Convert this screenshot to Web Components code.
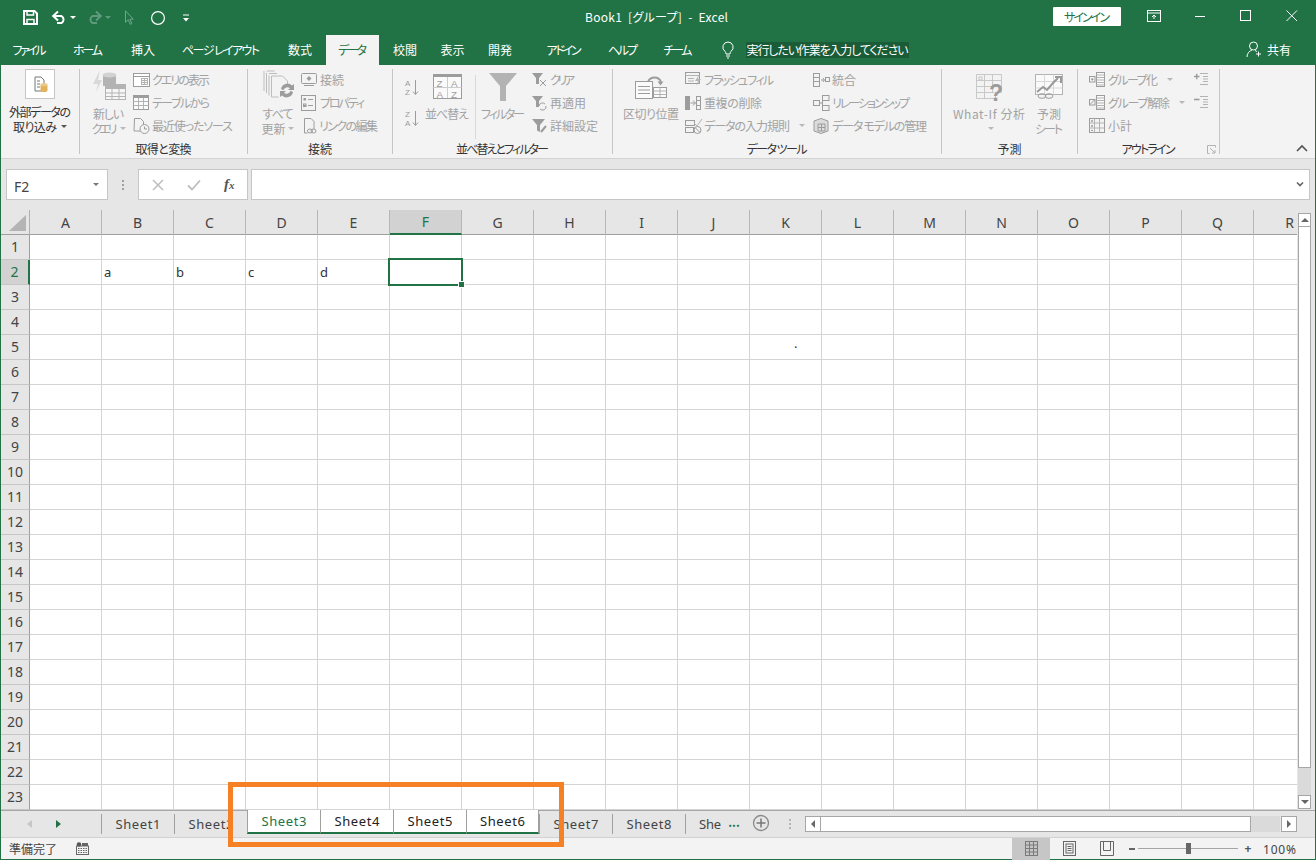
<!DOCTYPE html>
<html lang="ja"><head><meta charset="utf-8"><title>Book1</title>
<style>html,body{margin:0;padding:0;background:#217346}body{font-family:"Noto Sans CJK JP","Noto Sans",sans-serif;font-size:12px}</style>
</head><body>
<x-app></x-app>
<script>
const FONT='"Noto Sans CJK JP","Noto Sans",sans-serif';
const G='#b3b3b3',D='#9c9c9c';
class Base extends HTMLElement{
  constructor(){super();this.attachShadow({mode:'open'});}
  html(h){this.shadowRoot.innerHTML=h;}
  a(n,d){return this.hasAttribute(n)?this.getAttribute(n):d;}
}
class XT extends Base{
  constructor(){super();this.html('<style>:host{display:inline-block;white-space:pre;width:max-content;font-feature-settings:"palt" 1}</style><slot></slot>');}
  connectedCallback(){
    const s=+this.a('s',12),w=this.a('w',null),t=this.textContent;
    this.style.fontSize=s+'px';
    if(this.a('f'))this.style.fontFamily=this.a('f');
    if(w!==null&&t.length>1){
      const m=this.getBoundingClientRect().width,ls=(+w-m)/(t.length-1);
      this.style.letterSpacing=ls.toFixed(3)+'px';
      this.style.marginRight=(-ls).toFixed(3)+'px';
    }
  }
}
const L=(c)=>`fill="none" stroke="${c}"`;
const ICONS={
 save:[15,15,`<path d="M1 1h10.500L14 3.500V14H1z" ${L('#fff')} stroke-width="2"/><path d="M4 1.500v3.500h6.500V1.500M4 14V9.500h7V14" ${L('#fff')} stroke-width="1.500"/>`],
 undo:[15,13,`<path d="M2 5h7.500a4 4 0 0 1 0 7H5" ${L('#fff')} stroke-width="2"/><path d="M6 .5L1.200 5 6 9.500" ${L('#fff')} stroke-width="2"/>`],
 redo:[15,13,`<path d="M13 5H5.500a4 4 0 0 0 0 7H10" ${L('#5f9a7c')} stroke-width="2"/><path d="M9 .5L13.800 5 9 9.500" ${L('#5f9a7c')} stroke-width="2"/>`],
 cursor:[10,16,`<path d="M1.500 .8v11.500l2.800-2.600 2 4.600 1.600-.7-2-4.400h3.400z" ${L('#6fa58a')}/>`],
 circle:[14,14,`<circle cx="7" cy="7" r="6.400" ${L('#fff')} stroke-width="1.200"/>`],
 custom:[6,8,`<path d="M0 1h6" stroke="#fff"/><path d="M0 4h6L3 7.500z" fill="#fff"/>`],
 ribbonopt:[14,12,`<rect x=".5" y=".5" width="13" height="11" ${L('#fff')}/><path d="M0 3h14" stroke="#fff"/><path d="M7 9V5M5 7l2-2 2 2" ${L('#fff')}/>`],
 min:[12,12,`<path d="M1 6.500h10" stroke="#fff"/>`],
 max:[12,12,`<rect x=".5" y=".5" width="10" height="10" ${L('#fff')}/>`],
 close:[12,12,`<path d="M.5.5l10.500 10.500M11 .5L.5 11" stroke="#fff"/>`],
 bulb:[14,18,`<path d="M7 1a5.200 5.200 0 0 0-3 9.400c.6.6.9 1.300 1 2.600h4c.1-1.300.4-2 1-2.600A5.200 5.200 0 0 0 7 1z" ${L('#fff')}/><path d="M5 15h4M6 17h2" stroke="#fff"/>`],
 person:[16,16,`<circle cx="7.500" cy="5" r="4" ${L('#fff')}/><path d="M1 16c0-4 2.500-6 5-7M9 9.500c.8.3 1.500.7 2 1.200M12.500 10.500v5M10 13h5" ${L('#fff')}/>`],
 extern:[30,30,`<rect x=".5" y=".5" width="29" height="29" fill="#fff" stroke="#c6c6c6"/><path d="M10 8h6l3 3v11h-9z" fill="#fff" stroke="#777"/><path d="M12 12h3M12 15h3M12 18h3" stroke="#777"/><ellipse cx="19" cy="15.500" rx="3.500" ry="1.500" fill="#eaca8a"/><path d="M15.500 15.500v6c0 2 7 2 7 0v-6c0 2-7 2-7 0z" fill="#e3b35c"/>`],
 newq:[34,30,`<path d="M8 0L1 14h5l-2 8 6-12H6z" fill="#d8d8d8"/><path d="M11 7c0-4 13-4 13 0v9H11z" fill="${G}"/><ellipse cx="17.500" cy="5" rx="7" ry="2.500" fill="#d2d2d2"/><rect x="13.500" y="14.500" width="20" height="15" fill="#f6f6f6" stroke="${G}"/><path d="M13.500 18.500h20M13.500 23h20M13.500 26.500h20M20 18v11M27 18v11" ${L(G)}/><rect x="13" y="14" width="21" height="4" fill="${G}"/>`],
 qshow:[17,14,`<rect x=".5" y=".5" width="16" height="13" fill="#fff" stroke="${D}"/><path d="M.5 3.500h16" stroke="${D}"/><rect x="8.500" y="5.500" width="6" height="6" ${L(G)}/><path d="M8.500 7.500h6M8.500 9.500h6M11.500 5.500v6" stroke="${G}"/>`],
 table:[16,15,`<rect x=".5" y=".5" width="15" height="14" fill="#fafafa" stroke="${D}"/><rect x="0" y="0" width="16" height="3" fill="${D}"/><path d="M.5 6.500h15M.5 10.500h15M5.500 3v11M10.500 3v11" stroke="${G}"/>`],
 recent:[17,16,`<path d="M1.500 .5h6l3 3V13h-9.500z" ${L(D)}/><circle cx="11.500" cy="11" r="4.500" fill="#f3f3f3" stroke="${D}"/><path d="M11.500 8.500V11h2.500" ${L(D)}/>`],
 refresh:[31,30,`<path d="M1 1v20M3.500 1h8M3.500 3v20M6 3.500h8M6 5.500v20M8.500 6h11l5 5v4M8.500 6v21h7" ${L('#bdbdbd')}/><path d="M18 20a6.500 6.500 0 0 1 11-3.500l2-1.500v6h-6l2-1.800a4 4 0 0 0-6.500 2zM30 23a6.500 6.500 0 0 1-11 3.500l-2 1.500v-6h6l-2 1.800a4 4 0 0 0 6.500-2z" fill="${D}" transform="translate(0 -1)"/>`],
 conn:[16,13,`<rect x=".5" y=".5" width="15" height="10" rx="1" ${L(D)}/><path d="M8 3l2.500 2.500L8 8 5.500 5.500z" fill="${D}"/><path d="M3 12.500h10" stroke="${D}"/>`],
 props:[15,16,`<rect x=".5" y=".5" width="14" height="15" ${L(D)}/><path d="M3 4.500h2M7 4.500h5M3 10.500h2M7 10.500h5" stroke="${D}"/><rect x="2.500" y="3" width="2.500" height="2.500" fill="${D}"/><rect x="2.500" y="9" width="2.500" height="2.500" ${L(D)}/>`],
 link:[14,16,`<path d="M1.500 .5h6.500l3 3V11M1.500 .5V15h3" ${L(D)}/><ellipse cx="7" cy="13" rx="2.500" ry="2" ${L(D)}/><ellipse cx="10.500" cy="13" rx="2.500" ry="2" ${L(D)}/>`],
 az:[14,16,`<text x="0" y="7" font-size="8" fill="${D}" font-family="Liberation Sans">A</text><text x="0" y="16" font-size="8" fill="${D}" font-family="Liberation Sans">Z</text><path d="M10.500 1v14M8 12.500l2.500 3 2.500-3" ${L(D)}/>`],
 za:[14,16,`<text x="0" y="7" font-size="8" fill="${D}" font-family="Liberation Sans">Z</text><text x="0" y="16" font-size="8" fill="${D}" font-family="Liberation Sans">A</text><path d="M10.500 1v14M8 12.500l2.500 3 2.500-3" ${L(D)}/>`],
 sort:[29,25,`<rect x=".5" y=".5" width="28" height="24" fill="#fafafa" stroke="${D}"/><rect width="29" height="3" fill="${D}"/><path d="M14.500 3v21M.5 13.500h28" stroke="#ccc"/><text x="3.500" y="12.500" font-size="9.800" fill="${D}" font-family="Liberation Sans">Z</text><text x="18" y="12.500" font-size="9.800" fill="${D}" font-family="Liberation Sans">A</text><text x="3.500" y="23.500" font-size="9.800" fill="${D}" font-family="Liberation Sans">A</text><text x="18" y="23.500" font-size="9.800" fill="${D}" font-family="Liberation Sans">Z</text>`],
 filter:[28,28,`<path d="M0 0h28L17 13v15h-6V13z" fill="${G}"/>`],
 fclear:[15,16,`<path d="M0 1h11L7 6v6H4V6z" fill="${D}"/><path d="M8 8l6 6M14 8l-6 6" ${L(D)}/>`],
 freapply:[15,16,`<path d="M0 1h11L7 6v6H4V6z" fill="${D}"/><path d="M7 11a3.500 3.500 0 0 1 6-2M14 11a3.500 3.500 0 0 1-6 3" ${L(D)}/>`],
 fadv:[15,16,`<path d="M0 1h13L8 7v7l-3-1.500V7z" fill="${D}"/><path d="M9 14l5-6" stroke="${D}" stroke-width="2"/>`],
 split:[32,25,`<path d="M13 8a7 7 0 0 1 13 0" ${L(D)} stroke-width="2"/><path d="M22.500 7.500h6l-3 4z" fill="${D}"/><rect x=".5" y="7.500" width="17" height="17" fill="#fbfbfb" stroke="${D}"/><path d="M3 12.500h12M3 16h12M3 19.500h12" stroke="${D}"/><rect x="18.500" y="13.500" width="13" height="10" fill="#fbfbfb" stroke="${D}"/><path d="M18.500 17h13M18.500 20.500h13M25 13.500v10" stroke="${G}"/>`],
 flash:[17,15,`<rect x=".5" y=".5" width="14" height="11" ${L(D)}/><path d="M.5 3.500h14M3 6.500h6M3 9h6" stroke="${G}"/><path d="M14 3l-4 6h3l-2 5 5-7h-3z" fill="${G}"/>`],
 dup:[16,16,`<rect x="0" y="1" width="5" height="14" fill="${D}"/><rect x="11.500" y="1.500" width="4" height="13" ${L(D)}/><path d="M11.500 5.500h4M11.500 10.500h4M5.500 8h5M8 5.500l2.500 2.500L8 10.500" ${L(D)}/>`],
 valid:[17,16,`<rect x=".5" y="2.500" width="9" height="5" ${L(D)}/><rect x=".5" y="9.500" width="8" height="5" ${L(D)}/><path d="M9 5l3 3 5-7" ${L(G)}/><circle cx="12.500" cy="12" r="3.500" ${L(D)}/><path d="M10 9.500l5 5" stroke="${D}"/>`],
 consol:[17,14,`<rect x=".5" y=".5" width="6" height="13" ${L(D)}/><path d="M.5 4.500h6M.5 8.500h6M8 7h3M10 5l1.500 2L10 9" stroke="${D}" fill="none"/><rect x="12.500" y="4.500" width="4" height="4" ${L(D)}/>`],
 rel:[17,16,`<rect x=".5" y="5.500" width="6" height="5" ${L(D)}/><rect x="9.500" y=".5" width="6.500" height="5" ${L(D)}/><rect x="9.500" y="10.500" width="6.500" height="5" ${L(D)}/><path d="M6.500 8h3M9.500 3v10" stroke="${D}"/>`],
 model:[16,16,`<path d="M8 .5L15 3v10l-7 2.500L1 13V3z" fill="#dcdcdc" stroke="${D}"/><path d="M5 6h7v7H5zM5 9.500h7M8.500 6v7" ${L(D)}/>`],
 whatif:[26,30,`<path d="M.5.500h25v18h-6v6h-19zM8.500.5v24M16.500.5v18M.5 6.500h25M.5 12.500h20M.5 18.500h18" ${L('#c8c8c8')}/><rect x="3" y="3" width="3" height="3" ${L('#c8c8c8')}/><text x="13" y="27" font-size="23" font-weight="700" fill="${D}" font-family="Liberation Sans">?</text>`],
 forecast:[28,25,`<rect x=".5" y=".5" width="27" height="20" fill="#fafafa" stroke="${G}"/><path d="M9.500.5v20M18.500.5v20M.5 7.500h27M.5 14h27" stroke="#d8d8d8"/><path d="M2 18l6-5 4 3 6-7 5-5" ${L('#999')} stroke-width="2"/><path d="M20 3h6v6" ${L('#999')} stroke-width="2"/><ellipse cx="7" cy="22" rx="4" ry="2.300" ${L(D)}/><ellipse cx="14" cy="22" rx="4" ry="2.300" ${L(D)}/>`],
 grp:[16,15,`<rect x=".5" y="4.500" width="5.500" height="5.500" ${L(D)}/><path d="M2 7.300h2.500M3.300 6v2.600" stroke="${D}"/><rect x="7.500" y=".5" width="8" height="14" fill="#fafafa" stroke="${D}"/><path d="M7.500 3h8M7.500 5.500h8M7.500 8h8M7.500 10.500h8M7.500 13h8" stroke="${G}"/>`],
 ungrp:[16,15,`<rect x=".5" y="4.500" width="5.500" height="5.500" ${L(D)}/><path d="M1 9.500L5.500 5" stroke="${D}"/><rect x="7.500" y=".5" width="8" height="14" fill="#fafafa" stroke="${D}"/><path d="M7.500 3h8M7.500 5.500h8M7.500 8h8M7.500 10.500h8M7.500 13h8" stroke="${G}"/>`],
 subtot:[16,15,`<rect x=".5" y=".5" width="15" height="14" ${L(D)}/><path d="M5.500.5v14M10.500.5v14M5.500 5h10M5.500 10h10M.5 5h5M.5 10h5" stroke="${G}"/><path d="M2 3h2M3 2v2M2 8h2M3 7v2M2 12.500h2" stroke="${D}"/>`],
 showd:[15,13,`<path d="M0 3.500h5.500M2.750 .8v5.400" stroke="${D}" stroke-width="1.400"/><path d="M6 .5h8M9 3.500h5M9 6h5M9 8.500h5M6 11.500h8" stroke="${G}" fill="none"/>`],
 hided:[15,13,`<path d="M0 3.500h5.500" stroke="${D}" stroke-width="1.600"/><path d="M6 .5h8M9 3.500h5M9 6h5M9 8.500h5M6 11.500h8" stroke="${G}" fill="none"/>`],
 launch:[9,9,`<path d="M.5 8.500v-8h8v2M.5 8.500h2" ${L(G)}/><path d="M3 3l5 5M8 5v3H5" ${L(G)}/>`],
 chev:[12,7,`<path d="M1 6l5-5 5 5" ${L('#555')} stroke-width="1.700"/>`],
 x:[12,12,`<path d="M1 1l10 10M11 1L1 11" ${L('#bdbdbd')} stroke-width="1.500"/>`],
 check:[14,12,`<path d="M1 6.500L5 10.500 13 1.500" ${L('#bdbdbd')} stroke-width="1.800"/>`],
 drop:[8,7,`<path d="M1 1.500l3 3 3-3" ${L('#666')} stroke-width="1.700"/>`],
 plus:[18,18,`<circle cx="9" cy="9" r="7.500" ${L('#8a8a8a')} stroke-width="1.300"/><path d="M9 4.500v9M4.500 9h9" stroke="#777" stroke-width="1.500"/>`],
 macro:[13,13,`<circle cx="3" cy="2.500" r="2.300" fill="#555"/><rect x=".5" y="4" width="12" height="8.500" ${L('#666')}/><path d="M2 6.500h9M2 8.500h9M2 10.500h9" stroke="#666" stroke-dasharray="1.500 1"/><rect x="6" y="1" width="6" height="3" fill="#666"/>`],
 vnormal:[13,15,`<rect x=".5" y=".5" width="12" height="14" ${L('#7a7a7a')}/><path d="M.5 4h12M.5 7.500h12M.5 11h12M4.500.5v14M8.500.5v14" stroke="#7a7a7a"/>`],
 vpage:[13,15,`<rect x=".5" y=".5" width="12" height="14" ${L('#666')}/><rect x="3" y="3" width="7" height="9" ${L('#666')}/><path d="M4.500 5.500h4M4.500 7.500h4M4.500 9.500h4" stroke="#666"/>`],
 vbreak:[14,15,`<path d="M3.500.5v9h7v-9M.5.500h13v14H.5z" ${L('#666')}/>`],
};
class XIcon extends Base{
  connectedCallback(){
    const [w,h,c]=ICONS[this.a('n')];
    this.html(`<style>:host{display:inline-flex;flex:none;width:${w}px;height:${h}px}svg{display:block;overflow:visible}</style><svg xmlns="http://www.w3.org/2000/svg" width="${w}" height="${h}" viewBox="0 0 ${w} ${h}">${c}</svg>`);
  }
}
class XCaret extends Base{
  connectedCallback(){this.html(`<style>:host{display:inline-block;flex:none;width:0;height:0;border:3px solid transparent;border-top:3.5px solid ${this.a('c','#b8b8b8')};border-bottom:0;margin-left:${this.a('ml',4)}px;vertical-align:middle}</style>`);}
}
class XApp extends Base{
  connectedCallback(){this.html(`<style>
  :host{display:flex;flex-direction:column;position:relative;width:1316px;height:860px;box-sizing:border-box;padding:0 1px 1px;background:#217346;overflow:hidden;font-family:${FONT};font-size:12px}
  .sheet{display:flex;height:600px;background:#e6e6e6}
  </style>
  <x-titlebar></x-titlebar><x-tabbar></x-tabbar><x-ribbon></x-ribbon><x-formula></x-formula>
  <div class="sheet"><x-sheet></x-sheet><x-vscroll></x-vscroll></div>
  <x-sheettabs></x-sheettabs><x-statusbar></x-statusbar><x-callout></x-callout>`);}
}
class XTitlebar extends Base{
  connectedCallback(){this.html(`<style>
  :host{display:flex;align-items:center;height:35px;color:#fff;flex:none}
  x-icon{display:inline-flex}
  .b{margin-left:auto;background:#fff;color:#217346;width:68px;height:19px;display:flex;align-items:center;justify-content:center;border-radius:1px;margin-top:-2px}
  .w{width:46px;display:flex;justify-content:center;align-items:center;height:30px;margin-top:-4px}
  .g{margin-left:10px}
  .t{margin-top:-3px}
  </style>
  <x-icon n="save" style="margin-left:22px"></x-icon>
  <x-icon n="undo" style="margin-left:14px"></x-icon><x-caret c="#fff" ml="3"></x-caret>
  <x-icon n="redo" style="margin-left:11px"></x-icon><x-caret c="#5f9a7c" ml="3"></x-caret>
  <x-icon n="cursor" style="margin-left:13px"></x-icon>
  <x-icon n="circle" style="margin-left:17px"></x-icon>
  <x-icon n="custom" style="margin-left:18px"></x-icon>
  <span class="t" style="margin-left:396px"><x-t w="143">Book1  [グループ]  -  Excel</x-t></span>
  <span class="b"><x-t w="46">サインイン</x-t></span><span class="g"></span>
  <span class="w"><x-icon n="ribbonopt"></x-icon></span><span class="w"><x-icon n="min"></x-icon></span><span class="w"><x-icon n="max"></x-icon></span><span class="w"><x-icon n="close"></x-icon></span>`);}
}
class XTabbar extends Base{
  connectedCallback(){
    const tabs=[['ファイル',57,34],['ホーム',60,30],['挿入',50,24],['ページ レイアウト',106,78],['数式',52,24],['データ',53,29],['校閲',52,24],['表示',43,24],['開発',52,24],['アドイン',76,35],['ヘルプ',42,30],['チーム',68,29]];
    this.html(`<style>
    :host{display:flex;height:30px;color:#fff;align-items:stretch;flex:none}
    .tab{display:flex;align-items:center;justify-content:center;padding-bottom:2px;box-sizing:border-box}
    .on{background:#f3f3f3;color:#217346}
    .s{align-self:center;margin:-1px 0 0 11px;background:#1a5c38;height:16px;width:163px;display:flex;align-items:center;justify-content:center}
    .share{margin-left:auto;display:flex;align-items:center;padding:0 24px 2px 0;gap:5px}
    x-icon{align-self:center}
    </style>${tabs.map((t,i)=>`<span class="tab ${i==5?'on':''}" style="width:${t[1]}px"><x-t w="${t[2]}">${t[0]}</x-t></span>`).join('')}
    <x-icon n="bulb" style="margin-left:9px"></x-icon>
    <span class="s"><x-t w="162">実行したい作業を入力してください</x-t></span>
    <span class="share"><x-icon n="person"></x-icon><x-t w="24">共有</x-t></span>`);
  }
}
class XRg extends Base{
  connectedCallback(){this.html(`<style>
  :host{display:flex;flex-direction:column;flex:none;box-sizing:border-box;height:85px;border-right:1px solid #c6c6c6;width:${this.a('w')}px;position:relative}
  .body{display:flex;height:71px;align-items:flex-start}
  .lb{height:14px;line-height:18px;text-align:center;color:#333;white-space:nowrap}
  x-icon{position:absolute;right:3px;bottom:0}
  </style><div class="body"><slot></slot></div><div class="lb"><x-t ${this.a('lw')?`w="${this.a('lw')}"`:''}>${this.a('label','')}</x-t></div>${this.hasAttribute('launch')?'<x-icon n="launch"></x-icon>':''}`);}
}
class XLb extends Base{
  connectedCallback(){this.html(`<style>
  :host{display:flex;flex-direction:column;align-items:center;flex:none;width:${this.a('w')}px;color:${this.a('c','#a2a2a2')};line-height:14.5px}
  .ic{height:${this.a('h',38)}px;display:flex;justify-content:center;align-items:flex-start;padding-top:${this.a('pt',1)}px;box-sizing:border-box}
  </style><div class="ic"><x-icon n="${this.a('i')}"></x-icon></div><slot></slot>`);}
}
class XSb extends Base{
  connectedCallback(){this.html(`<style>
  :host{display:flex;align-items:center;height:23px;color:#a2a2a2;white-space:nowrap}
  .i{width:${this.a('iw',19)}px;flex:none;display:flex;align-items:center}
  </style><span class="i"><x-icon n="${this.a('i')}"></x-icon></span><slot></slot>`);}
}
class XRibbon extends Base{
  connectedCallback(){this.html(`<style>
  :host{display:flex;flex:none;box-sizing:border-box;height:94px;background:#f3f3f3;padding-top:4px;border-bottom:1px solid #d2d2d2}
  .col{display:flex;flex-direction:column;flex:none;margin-top:-1px}
  .ln{display:flex;align-items:center;white-space:nowrap}
  .sep{width:1px;height:64px;background:#d8d8d8;margin-top:6px;flex:none}
  .chev{margin-left:auto;align-self:flex-end;padding:0 7px 3px 0}
  x-lb x-t{display:block}
  </style>
  <x-rg w="79">
    <x-lb w="78" i="extern" h="36" pt="0" c="#333"><x-t w="62">外部データの</x-t><span class="ln"><x-t w="44">取り込み</x-t><x-caret c="#555" ml="4"></x-caret></span></x-lb>
  </x-rg>
  <x-rg w="168" label="取得と変換" lw="56">
    <x-lb w="51" i="newq" style="margin-left:3px"><x-t w="31">新しい</x-t><span class="ln"><x-t w="26">クエリ</x-t><x-caret ml="2"></x-caret></span></x-lb>
    <div class="col" style="margin-left:-1px">
      <x-sb i="qshow"><x-t w="58">クエリの表示</x-t></x-sb>
      <x-sb i="table"><x-t w="58">テーブルから</x-t></x-sb>
      <x-sb i="recent"><x-t w="81">最近使ったソース</x-t></x-sb>
    </div>
  </x-rg>
  <x-rg w="145" label="接続" lw="24">
    <x-lb w="40" i="refresh" style="margin-left:10px"><x-t w="31">すべて</x-t><span class="ln"><x-t w="24">更新</x-t><x-caret ml="3"></x-caret></span></x-lb>
    <div class="col" style="margin-left:3px">
      <x-sb i="conn"><x-t w="24">接続</x-t></x-sb>
      <x-sb i="props"><x-t w="45">プロパティ</x-t></x-sb>
      <x-sb i="link" iw="16" style="padding-left:2px"><x-t w="59">リンクの編集</x-t></x-sb>
    </div>
  </x-rg>
  <x-rg w="220" label="並べ替えとフィルター" lw="93">
    <div class="col" style="margin:0 0 0 12px;padding-top:10px;gap:15px;width:14px"><x-icon n="az"></x-icon><x-icon n="za"></x-icon></div>
    <x-lb w="44" i="sort" h="38" pt="5" style="margin-left:6px"><x-t w="44">並べ替え</x-t></x-lb>
    <span class="sep" style="margin-left:6px"></span>
    <x-lb w="44" i="filter" h="38" pt="4" style="margin-left:5px"><x-t w="44">フィルター</x-t></x-lb>
    <div class="col" style="margin-left:7px">
      <x-sb i="fclear" iw="18"><x-t w="25">クリア</x-t></x-sb>
      <x-sb i="freapply" iw="18"><x-t w="36">再適用</x-t></x-sb>
      <x-sb i="fadv" iw="18"><x-t w="48">詳細設定</x-t></x-sb>
    </div>
  </x-rg>
  <x-rg w="329" label="データ ツール" lw="61">
    <x-lb w="56" i="split" h="38" pt="5" style="margin-left:10px"><x-t w="56">区切り位置</x-t></x-lb>
    <div class="col" style="margin-left:6px;width:128px">
      <x-sb i="flash"><x-t w="70">フラッシュ フィル</x-t></x-sb>
      <x-sb i="dup"><x-t w="58">重複の削除</x-t></x-sb>
      <x-sb i="valid"><x-t w="86">データの入力規則</x-t><x-caret ml="9"></x-caret></x-sb>
    </div>
    <div class="col">
      <x-sb i="consol"><x-t w="24">統合</x-t></x-sb>
      <x-sb i="rel"><x-t w="78">リレーションシップ</x-t></x-sb>
      <x-sb i="model"><x-t w="95">データ モデルの管理</x-t></x-sb>
    </div>
  </x-rg>
  <x-rg w="136" label="予測" lw="24">
    <x-lb w="72" i="whatif" h="38" pt="5" style="margin-left:11px"><x-t w="72">What-If 分析</x-t><x-caret style="margin-top:5px"></x-caret></x-lb>
    <x-lb w="40" i="forecast" h="38" pt="5" style="margin-left:4px"><x-t w="24">予測</x-t><x-t w="28">シート</x-t></x-lb>
  </x-rg>
  <x-rg w="142" label="アウトライン" lw="54" launch>
    <div class="col" style="margin-left:11px;width:105px">
      <x-sb i="grp"><x-t w="50">グループ化</x-t><x-caret ml="9"></x-caret></x-sb>
      <x-sb i="ungrp"><x-t w="62">グループ解除</x-t><x-caret ml="9"></x-caret></x-sb>
      <x-sb i="subtot"><x-t w="24">小計</x-t></x-sb>
    </div>
    <div class="col" style="margin-top:0;padding-top:4px;gap:10px"><x-icon n="showd"></x-icon><x-icon n="hided"></x-icon></div>
  </x-rg>
  <span class="chev"><x-icon n="chev"></x-icon></span>`);}
}
class XFormula extends Base{
  connectedCallback(){this.html(`<style>
  :host{display:flex;flex:none;box-sizing:border-box;height:51px;background:#e6e6e6;padding:10px 5px 10px 5px;align-items:stretch}
  .box{background:#fff;border:1px solid #c6c6c6;box-sizing:border-box;display:flex;align-items:center}
  .name{width:102px;padding:0 7px;justify-content:space-between;color:#444;font:14px "Noto Sans",sans-serif}
  .name x-t{padding-top:3px}
  .name x-caret{margin-right:1px}
  .dots{width:30px;display:flex;flex-direction:column;align-items:center;justify-content:center;gap:2px}
  .dots i{width:2px;height:2px;background:#a0a0a0}
  .fx{width:110px;margin-right:3px;padding:0}
  .in{flex:1;justify-content:flex-end;padding-right:5px}
  .f{font:italic 700 15px "Liberation Serif",serif;color:#555;margin-left:23px;line-height:1}
  .f small{font-size:11px}
  </style><div class="box name"><x-t f="'Noto Sans',sans-serif" s="14">F2</x-t><x-caret c="#777" ml="0"></x-caret></div>
  <div class="dots"><i></i><i></i><i></i></div>
  <div class="box fx"><x-icon n="x" style="margin-left:13px"></x-icon><x-icon n="check" style="margin-left:23px"></x-icon><span class="f">f<small>x</small></span></div>
  <div class="box in"><x-icon n="drop"></x-icon></div>`);}
}
class XSheet extends Base{
  connectedCallback(){
    const cols='ABCDEFGHIJKLMNOPQR'.split('');
    const vals={'1,1':'a','2,1':'b','3,1':'c','4,1':'d'};
    let h=`<div class="corner"><svg width="17" height="16"><path d="M17 0V16H0z" fill="#b4b4b4"/></svg></div>`;
    cols.forEach((c,i)=>h+=`<div class="ch ${i==5?'sel':''}">${c}</div>`);
    for(let r=0;r<23;r++){
      h+=`<div class="rh ${r==1?'sel':''}">${r+1}</div>`;
      cols.forEach((c,i)=>{
        let inner=vals[i+','+r]||'';
        if(i==5&&r==1)inner='<div class="cur"><i></i></div>';
        if(i==10&&r==4)inner='<span class="dot">.</span>';
        h+=`<div class="c">${inner}</div>`;
      });
    }
    this.html(`<style>
    :host{display:grid;flex:none;width:1296px;height:600px;overflow:hidden;grid-template-columns:29px repeat(18,72px);grid-template-rows:25px repeat(23,25px);background:#fff;color:#333;font:13px "Noto Sans",sans-serif}
    .corner,.ch,.rh{box-sizing:border-box;background:#e6e6e6;display:flex;align-items:center;justify-content:center;font-size:14px;color:#444}
    .corner{border-right:1px solid #b0b0b0;border-bottom:1px solid #9f9f9f;align-items:flex-end;justify-content:flex-end;padding:0 3px 3px 0}
    .ch{border-right:1px solid #b6b6b6;border-bottom:1px solid #9f9f9f}
    .ch.sel{background:#d2d2d2;color:#217346;border-bottom:2px solid #217346;height:25px}
    .rh{border-right:1px solid #9f9f9f;border-bottom:1px solid #c6c6c6;padding-bottom:2px}
    .rh.sel{background:#d2d2d2;color:#217346;border-right:2px solid #217346}
    .c{box-sizing:border-box;border-right:1px solid #d4d4d4;border-bottom:1px solid #d4d4d4;position:relative;line-height:24px;padding-left:2px;white-space:nowrap;background:#fff}
    .cur{position:absolute;left:-2px;top:-2px;width:75px;height:28px;border:2px solid #217346;box-sizing:border-box;z-index:2}
    .cur i{position:absolute;right:-3px;bottom:-3px;width:5px;height:5px;background:#217346;outline:1px solid #fff}
    .dot{position:absolute;left:44px;top:-4px}
    </style>${h}`);
  }
}
class XVscroll extends Base{
  connectedCallback(){this.html(`<style>
  :host{display:flex;flex-direction:column;flex:none;box-sizing:border-box;width:18px;height:600px;padding:3px 4px 1px 1px;background:#e6e6e6}
  .b{height:14px;flex:none;background:#fff;border:1px solid #a6a6a6;box-sizing:border-box;display:flex;align-items:center;justify-content:center}
  .u{width:0;height:0;border:4px solid transparent;border-bottom:4px solid #666;border-top:0}
  .d{width:0;height:0;border:4px solid transparent;border-top:4px solid #666;border-bottom:0}
  .th{height:541px;flex:none;background:#fff;border:1px solid #a6a6a6;border-top:0;box-sizing:border-box}
  .tr{flex:1;background:#dadada}
  </style><div class="b"><i class="u"></i></div><div class="th"></div><div class="tr"></div><div class="b"><i class="d"></i></div>`);}
}
class XSheettabs extends Base{
  connectedCallback(){
    const names=['Sheet1','Sheet2','Sheet3','Sheet4','Sheet5','Sheet6','Sheet7','Sheet8'];
    this.html(`<style>
    :host{display:flex;flex:none;box-sizing:border-box;height:27px;background:#e6e6e6;border-top:1px solid #a8a8a8;color:#444;align-items:flex-start}
    .nav{width:100px;height:26px;display:flex;align-items:center;flex:none}
    .nav i{width:0;height:0;border:4px solid transparent}
    .l{border-right:5px solid #c6c6c6!important;border-left:0!important;margin-left:26px}
    .r{border-left:5px solid #217346!important;border-right:0!important;margin-left:24px}
    .t{width:73px;height:20px;margin-top:3px;box-sizing:border-box;border-left:1px solid #a0a0a0;display:flex;align-items:center;justify-content:center;flex:none;overflow:hidden}
    .on{margin-top:-1px;background:#fff;color:#222;border-bottom:2px solid #217346;height:24px}
    .act{color:#217346}
    .end{border-right:1px solid #a0a0a0}
    .she{width:38px;justify-content:flex-start;padding-left:13px;}
    .more{color:#217346;font-weight:700;width:22px;text-align:center;line-height:22px;height:22px;flex:none}
    .plus{margin:3px 0 0 7px}
    .dots{width:29px;height:26px;display:flex;flex-direction:column;align-items:center;justify-content:center;gap:2px;flex:none;margin-left:5px}
    .dots i{width:2px;height:2px;background:#b4b4b4}
    .hs{margin-top:5px;display:flex;height:16px;width:490px;flex:none;box-sizing:border-box;margin-left:1px}
    .btn{width:16px;background:#fff;border:1px solid #a6a6a6;box-sizing:border-box;display:flex;align-items:center;justify-content:center;flex:none}
    .ll{width:0;height:0;border:4px solid transparent;border-right:4px solid #666;border-left:0}
    .rr{width:0;height:0;border:4px solid transparent;border-left:4px solid #666;border-right:0}
    .thumb{width:430px;background:#fff;border:1px solid #a6a6a6;border-left:0;box-sizing:border-box;flex:none}
    .track{width:29px;background:#dadada;flex:none;margin-right:1px}
    </style>
    <div class="nav"><i class="l"></i><i class="r"></i></div>
    ${names.map((n,i)=>`<span class="t ${i>=2&&i<=5?'on':''} ${i==2?'act':''} ${i==5?'end':''}"><x-t f="'Noto Sans',sans-serif" s="13" w="45">${n}</x-t></span>`).join('')}
    <span class="t she" style="border-left:1px solid #a0a0a0"><x-t f="'Noto Sans',sans-serif" s="13" w="22">She</x-t></span>
    <span class="more">...</span>
    <x-icon class="plus" n="plus"></x-icon>
    <div class="dots"><i></i><i></i><i></i></div>
    <div class="hs"><div class="btn"><i class="ll"></i></div><div class="thumb"></div><div class="track"></div><div class="btn"><i class="rr"></i></div></div>`);
  }
}
class XStatusbar extends Base{
  connectedCallback(){this.html(`<style>
  :host{display:flex;flex:none;height:22px;background:#f3f3f3;border-top:1px solid #d2d2d2;box-sizing:border-box;align-items:center;color:#444}
  .st{margin-left:8px}
  .m{margin-left:19px}
  .v{width:38px;height:22px;display:flex;align-items:center;justify-content:center;flex:none}
  .v.on{background:#c6c6c6}
  .sp{margin-left:auto}
  .mn{width:6px;height:2px;background:#666;margin:0 0 0 3px}
  .tr{width:100px;height:1px;background:#a6a6a6;margin-left:3px;position:relative;flex:none}
  .tr i{position:absolute;left:48px;top:-5px;width:5px;height:11px;background:#666}
  .pl{margin-left:3px;font:700 12px "Noto Sans",sans-serif;color:#555;width:14px;text-align:center}
  .pc{margin-left:8px;margin-right:19px}
  </style><span class="st"><x-t w="48">準備完了</x-t></span><x-icon class="m" n="macro"></x-icon>
  <span class="sp"></span>
  <span class="v on"><x-icon n="vnormal"></x-icon></span><span class="v"><x-icon n="vpage"></x-icon></span><span class="v"><x-icon n="vbreak"></x-icon></span>
  <span class="mn"></span><span class="tr"><i></i></span><span class="pl">+</span>
  <span class="pc"><x-t f="'Noto Sans',sans-serif" s="12" w="33">100%</x-t></span>`);}
}
class XCallout extends Base{
  connectedCallback(){this.html(`<style>:host{position:absolute;left:228px;top:782px;width:336px;height:65px;box-sizing:border-box;border:5px solid #f58025;pointer-events:none;z-index:5}</style>`);}
}
const defs={'x-t':XT,'x-icon':XIcon,'x-caret':XCaret,'x-rg':XRg,'x-lb':XLb,'x-sb':XSb,'x-titlebar':XTitlebar,'x-tabbar':XTabbar,'x-ribbon':XRibbon,'x-formula':XFormula,'x-sheet':XSheet,'x-vscroll':XVscroll,'x-sheettabs':XSheettabs,'x-statusbar':XStatusbar,'x-callout':XCallout,'x-app':XApp};
for(const k in defs)customElements.define(k,defs[k]);
</script>
</body></html>
